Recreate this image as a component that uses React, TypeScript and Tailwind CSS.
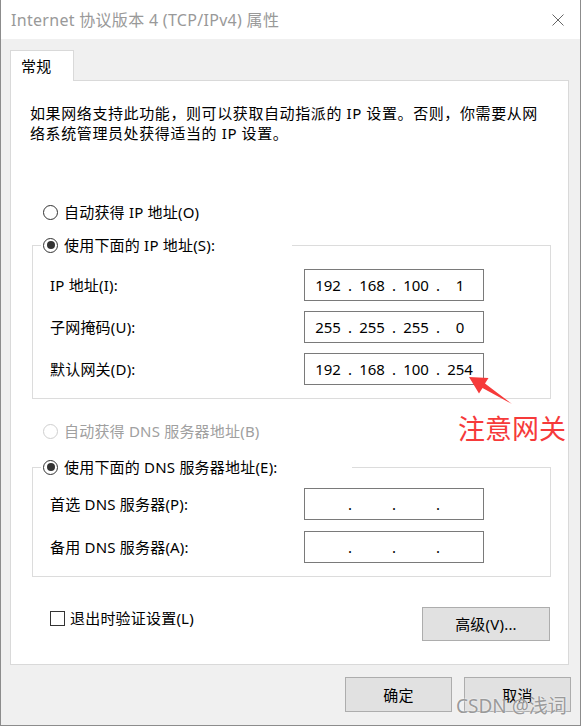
const font = "font-['Noto_Sans','Noto_Sans_CJK_SC',sans-serif]";

function Radio({ checked, disabled }: { checked?: boolean; disabled?: boolean }) {
  return (
    <span
      className={`flex h-[15px] w-[15px] shrink-0 items-center justify-center rounded-full border bg-white ${
        disabled ? "border-[#cfcfcf]" : "border-[#333]"
      }`}
    >
      {checked && <span className="h-[8px] w-[8px] rounded-full bg-[#333]" />}
    </span>
  );
}

function IpBox({ parts }: { parts: string[] }) {
  return (
    <div className="flex h-[32px] w-[180px] items-center border border-[#7a7a7a] bg-white px-[3px] text-[15px] leading-[20px] tracking-normal text-black">
      {parts.map((p, i) => (
        <div key={i} className="flex items-center">
          {i > 0 && <span className="w-[4px] text-center">.</span>}
          <span className="w-[40px] text-center">{p}</span>
        </div>
      ))}
    </div>
  );
}

function Row({ label, parts }: { label: string; parts: string[] }) {
  return (
    <div className="flex items-center pl-[17px]">
      <span className="w-[254px]">{label}</span>
      <IpBox parts={parts} />
    </div>
  );
}

export default function App() {
  return (
    <div
      className={`relative h-[726px] w-[581px] overflow-hidden border-x border-b border-[#8c8c8c] bg-[#f0f0f0] text-[15px] leading-[20px] tracking-[0.2px] text-black ${font}`}
    >
      {/* title bar */}
      <div className="flex h-[39px] items-center justify-between bg-white pl-[10px] pr-[16px]">
        <span className="text-[16px] tracking-[0.3px] text-[#999]">Internet 协议版本 4 (TCP/IPv4) 属性</span>
        <svg width="12" height="12" viewBox="0 0 12 12">
          <path d="M0.5 0.5 L11.5 11.5 M11.5 0.5 L0.5 11.5" stroke="#666" strokeWidth="1" />
        </svg>
      </div>

      {/* tab */}
      <div className="relative z-10 ml-[9px] mt-[11px] -mb-px flex h-[31px] w-[64px] items-center border-x border-t border-[#d9d9d9] bg-white pl-[10px]">
        常规
      </div>

      {/* panel */}
      <div className="ml-[9px] h-[585px] w-[559px] border border-[#d9d9d9] bg-white">
        <p className="whitespace-nowrap pl-[19px] pt-[22px] tracking-[0.6px]">
          如果网络支持此功能，则可以获取自动指派的 IP 设置。否则，你需要从网
          <br />
          络系统管理员处获得适当的 IP 设置。
        </p>

        <div className="mt-[59px] flex items-center gap-[6px] pl-[32px]">
          <Radio />
          <span>自动获得 IP 地址(O)</span>
        </div>

        <fieldset className="ml-[21px] mt-[13px] w-[519px] border border-[#dcdcdc] pb-[13px]">
          <legend className="ml-[8px] flex w-[251px] items-center gap-[6px] bg-white pl-[2px]">
            <Radio checked />
            <span>使用下面的 IP 地址(S):</span>
          </legend>
          <div className="flex flex-col gap-[10px] pt-[14px]">
            <Row label="IP 地址(I):" parts={["192", "168", "100", "1"]} />
            <Row label="子网掩码(U):" parts={["255", "255", "255", "0"]} />
            <Row label="默认网关(D):" parts={["192", "168", "100", "254"]} />
          </div>
        </fieldset>

        <div className="mt-[22px] flex items-center gap-[6px] pl-[32px] text-[#a0a0a0]">
          <Radio disabled />
          <span>自动获得 DNS 服务器地址(B)</span>
        </div>

        <fieldset className="ml-[21px] mt-[16px] w-[519px] border border-[#dcdcdc] pb-[13px]">
          <legend className="ml-[8px] flex w-[311px] items-center gap-[6px] bg-white pl-[2px]">
            <Radio checked />
            <span>使用下面的 DNS 服务器地址(E):</span>
          </legend>
          <div className="flex flex-col gap-[11px] pt-[11px]">
            <Row label="首选 DNS 服务器(P):" parts={["", "", "", ""]} />
            <Row label="备用 DNS 服务器(A):" parts={["", "", "", ""]} />
          </div>
        </fieldset>

        <div className="mt-[30px] flex items-start justify-between pl-[39px] pr-[18px]">
          <div className="mt-[1px] flex items-center gap-[5px]">
            <span className="h-[15px] w-[15px] border border-[#333] bg-white" />
            <span>退出时验证设置(L)</span>
          </div>
          <button className="h-[34px] w-[128px] border border-[#adadad] bg-[#e1e1e1]">高级(V)...</button>
        </div>
      </div>

      {/* dialog buttons */}
      <div className="mt-[12px] flex justify-end gap-[12px] pr-[9px]">
        <button className="h-[35px] w-[107px] border border-[#adadad] bg-[#e1e1e1]">确定</button>
        <button className="h-[35px] w-[107px] border border-[#adadad] bg-[#e1e1e1]">取消</button>
      </div>

      {/* annotation */}
      <svg className="absolute left-0 top-0" width="581" height="726" viewBox="0 0 581 726">
        <polygon
          points="468,377 487.5,378 484,383.5 511,404 481.5,388 478,393.5"
          fill="#f63a3a"
        />
      </svg>
      <span className="absolute left-[457px] top-[412px] text-[27px] leading-[34px] tracking-normal text-[#f63a3a]">
        注意网关
      </span>
      <span className="absolute left-[455px] top-[694px] text-[19px] leading-[24px] tracking-normal text-[#9a9a9a] [text-shadow:0_0_2px_#fff]">
        CSDN @浅词
      </span>
    </div>
  );
}
